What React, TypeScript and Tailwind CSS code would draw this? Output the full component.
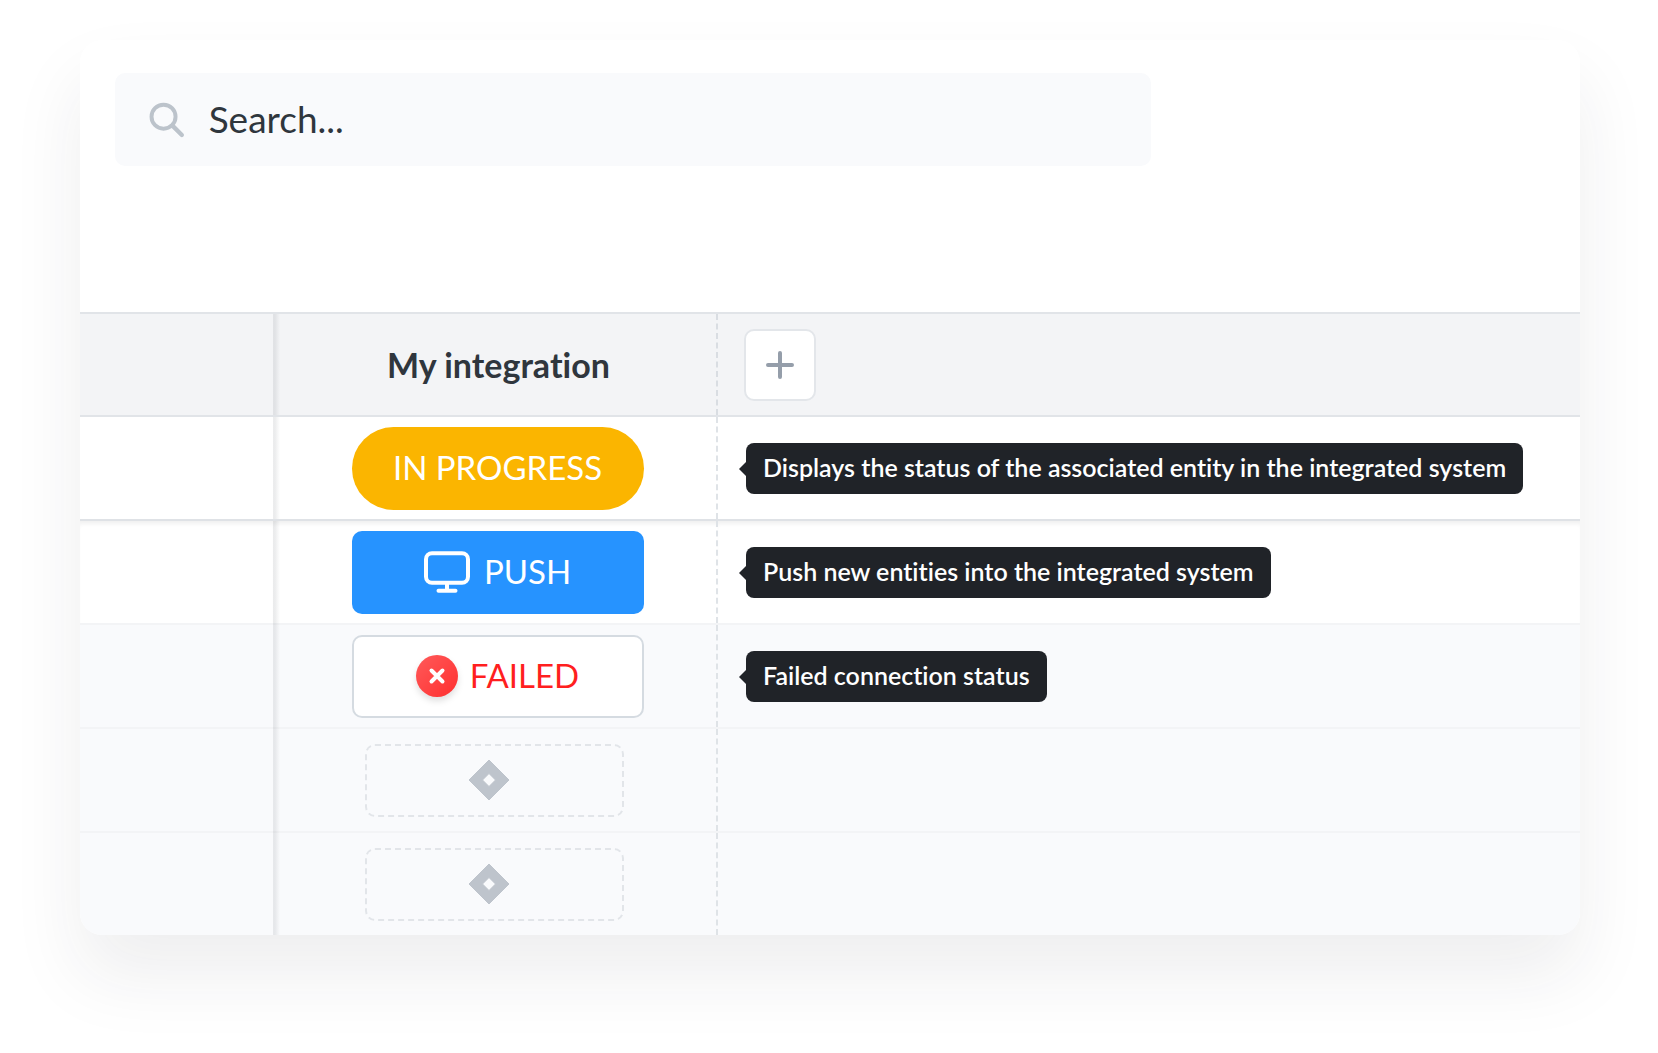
import type { ReactNode } from "react"

type Row = {
  id: string
  status: ReactNode
  hint?: string
  className: string
}

function SearchIcon() {
  return (
    <svg width="38" height="38" viewBox="0 0 38 38" fill="none" stroke="#bcc3cb" strokeWidth="4.2" aria-hidden="true">
      <circle cx="15.5" cy="15.5" r="12.8" />
      <path d="M25 25 35 35" strokeLinecap="round" strokeWidth="4.6" />
    </svg>
  )
}

function MonitorIcon() {
  return (
    <svg width="46" height="42" viewBox="0 0 46 42" fill="none" stroke="white" strokeWidth="4" aria-hidden="true">
      <rect x="2" y="2.2" width="42" height="29.6" rx="6" />
      <path d="M23 32v7" />
      <path d="M14.5 39.8h17" strokeLinecap="round" />
    </svg>
  )
}

function FailedIcon() {
  return (
    <svg width="42" height="42" viewBox="0 0 42 42" className="drop-shadow-[0_4px_3px_rgba(0,0,0,0.12)]" aria-hidden="true">
      <defs>
        <linearGradient id="failed-fill" x1="0" y1="0" x2="1" y2="1">
          <stop offset="0" stopColor="#ff5a5a" />
          <stop offset="1" stopColor="#ff2f2f" />
        </linearGradient>
      </defs>
      <circle cx="21" cy="21" r="21" fill="url(#failed-fill)" />
      <path d="M15.5 15.5l11 11M26.5 15.5l-11 11" stroke="white" strokeWidth="4" strokeLinecap="round" />
    </svg>
  )
}

function DiamondIcon() {
  return (
    <svg width="42" height="42" viewBox="0 0 42 42" aria-hidden="true">
      <path
        d="M21 1 41 21 21 41 1 21ZM21 14.5 14.5 21 21 27.5 27.5 21Z"
        fill="#bec4cc"
        stroke="#bec4cc"
        strokeWidth="1"
        strokeLinejoin="round"
        fillRule="evenodd"
      />
    </svg>
  )
}

function EmptySlot() {
  return (
    <button
      type="button"
      aria-label="Link entity"
      className="mx-auto flex h-[73px] w-[259px] items-center justify-center rounded-[10px] border-2 border-dashed border-[#e2e5e9] pr-3"
    >
      <DiamondIcon />
    </button>
  )
}

function Hint({ children }: { children: ReactNode }) {
  return (
    <div
      role="tooltip"
      className="relative inline-flex h-[51px] items-center rounded-lg bg-[#202328] px-[17px] text-[25px] font-semibold whitespace-nowrap text-white"
    >
      <svg width="8" height="16" viewBox="0 0 8 16" className="absolute top-[18px] -left-[7px]" aria-hidden="true">
        <path d="M8 0v16L0 8z" fill="#202328" />
      </svg>
      {children}
    </div>
  )
}

const rows: Row[] = [
  {
    id: "progress",
    status: (
      <div className="pl-1.5">
        <span className="mx-auto flex h-[83px] w-[292px] items-center justify-center rounded-full bg-[#fbb500] text-[33px] text-white">
          IN PROGRESS
        </span>
      </div>
    ),
    hint: "Displays the status of the associated entity in the integrated system",
    className: "border-[#e1e4e8]",
  },
  {
    id: "push",
    status: (
      <div className="pl-1.5">
        <button
          type="button"
          className="mx-auto flex h-[83px] w-[292px] items-center justify-center gap-3.5 rounded-[10px] bg-[#2693ff] text-[33px] text-white"
        >
          <MonitorIcon />
          PUSH
        </button>
      </div>
    ),
    hint: "Push new entities into the integrated system",
    className: "border-[#dfe2e6] shadow-[inset_0_5px_4px_-2px_rgba(0,0,0,0.06)]",
  },
  {
    id: "failed",
    status: (
      <div className="pl-1.5">
        <button
          type="button"
          className="mx-auto flex h-[83px] w-[292px] items-center justify-center gap-3 rounded-[10px] border-2 border-[#d5dbe1] bg-white text-[33px] text-[#ff1f1f]"
        >
          <FailedIcon />
          FAILED
        </button>
      </div>
    ),
    hint: "Failed connection status",
    className: "border-black/[0.025] bg-[#f9fafc]",
  },
  { id: "empty-1", status: <EmptySlot />, className: "border-black/[0.025] bg-[#f9fafc]" },
  { id: "empty-2", status: <EmptySlot />, className: "border-black/[0.025] bg-[#f9fafc]" },
]

const divider =
  "bg-[linear-gradient(to_right,rgba(40,48,60,0.09)_0px,rgba(40,48,60,0.09)_2px,transparent_7px)] bg-no-repeat bg-origin-border"

export default function App() {
  return (
    <main className="min-h-screen bg-white pt-10 pr-[78px] pb-[117px] pl-20 font-[Lato,sans-serif] text-[#2f363d] [font-variant-ligatures:no-common-ligatures]">
      <div className="overflow-hidden rounded-[22px] bg-white shadow-[0_40px_72px_rgba(32,35,50,0.08)]">
        <div className="px-[35px] pt-[33px] pb-[146px]">
          <label className="flex h-[93px] w-full max-w-[1036px] items-center gap-6 rounded-[10px] bg-[#f9fafc] px-[34px]">
            <SearchIcon />
            <input
              type="text"
              aria-label="Search"
              placeholder="Search..."
              className="w-full bg-transparent pb-0.5 text-[37px] outline-none placeholder:text-[#2f363d]"
            />
          </label>
        </div>

        <table className="w-full table-fixed border-separate border-spacing-0">
          <colgroup>
            <col className="w-[193px]" />
            <col className="w-[445px]" />
            <col />
          </colgroup>
          <thead className="bg-[#f3f4f6]">
            <tr>
              <th className="border-t-2 border-[#e1e4e8] p-0" />
              <th className={`border-t-2 border-[#e1e4e8] p-0 ${divider}`}>
                <div className="flex h-[101px] items-center justify-center border-r-2 border-dashed border-[#d9dde2] pl-2 text-[34px] font-bold">
                  My integration
                </div>
              </th>
              <th className="border-t-2 border-[#e1e4e8] p-0 pl-[26px] text-left">
                <button
                  type="button"
                  aria-label="Add integration"
                  className="flex size-[72px] items-center justify-center rounded-[10px] border-2 border-[#e3e6ea] bg-white"
                >
                  <svg width="28" height="28" viewBox="0 0 28 28" stroke="#959eaa" strokeWidth="4" strokeLinecap="round" aria-hidden="true">
                    <path d="M14 2v24M2 14h24" />
                  </svg>
                </button>
              </th>
            </tr>
          </thead>
          <tbody>
            {rows.map((row) => (
              <tr key={row.id}>
                <td className={`border-t-2 p-0 ${row.className}`} />
                <td className={`border-t-2 p-0 ${row.className} ${divider}`}>
                  <div className="flex h-[102px] flex-col justify-center border-r-2 border-dashed border-[#dfe3e7]">
                    {row.status}
                  </div>
                </td>
                <td className={`border-t-2 p-0 pl-7 ${row.className}`}>{row.hint && <Hint>{row.hint}</Hint>}</td>
              </tr>
            ))}
          </tbody>
        </table>
      </div>
    </main>
  )
}
